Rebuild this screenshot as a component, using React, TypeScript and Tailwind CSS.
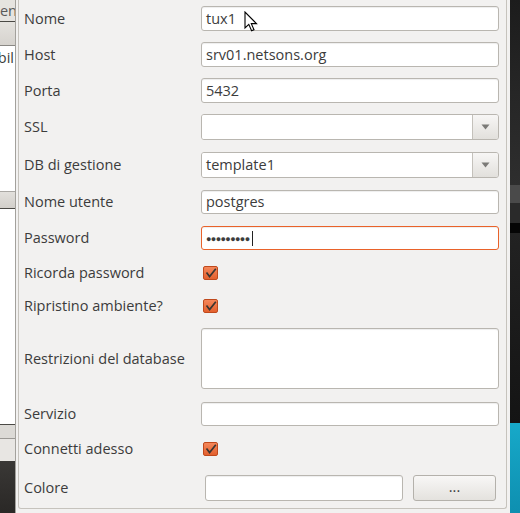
import React from "react";

const txt = "text-[14.5px] text-[#3c3c3c] font-['Open_Sans',sans-serif]";

function Field({ w = "w-[298px]", h = "h-[25px]", children, focus = false }: { w?: string; h?: string; children?: React.ReactNode; focus?: boolean }) {
  return (
    <div
      className={`${w} ${h} rounded-[3px] bg-white flex items-center px-[4px] shadow-[inset_0_1px_1px_rgba(0,0,0,0.07)] border ${
        focus ? "border-[#e9622a]" : "border-[#b9b6b0]"
      }`}
    >
      {children}
    </div>
  );
}

function Combo({ value }: { value?: string }) {
  return (
    <div className="w-[298px] h-[26px] rounded-[3px] border border-[#b9b6b0] flex overflow-hidden">
      <div className="flex-1 bg-white flex items-center px-[4px]">{value}</div>
      <div className="w-[26px] border-l border-[#c4c1bb] bg-gradient-to-b from-[#f7f6f5] to-[#e2e0dc] flex items-center justify-center">
        <svg width="9" height="6" viewBox="0 0 9 6">
          <path d="M0.5 0.5 L8.5 0.5 L4.5 5.5 Z" fill="#7b7a77" />
        </svg>
      </div>
    </div>
  );
}

function Check() {
  return (
    <div className="ml-[2px] w-[15px] h-[14px] rounded-[2px] border border-[#c0491c] bg-gradient-to-b from-[#f5875a] to-[#e3602d] flex items-center justify-center">
      <svg width="12" height="11" viewBox="0 0 12 11">
        <path d="M1.5 4.5 L4.6 8.6 L10.8 0.8" fill="none" stroke="#3b3632" strokeWidth="1.7" strokeLinejoin="miter" />
      </svg>
    </div>
  );
}

function Row({ label, h, mt, children }: { label: string; h: string; mt: string; children: React.ReactNode }) {
  return (
    <div className={`flex items-center ${h} ${mt}`}>
      <div className="w-[177px] shrink-0 whitespace-nowrap">{label}</div>
      {children}
    </div>
  );
}

export default function App() {
  return (
    <div className={`w-[520px] h-[513px] overflow-hidden flex bg-[#151515] ${txt}`}>
      {/* background window strip */}
      <div className="w-[15px] shrink-0 flex flex-col bg-white overflow-hidden">
        <div className="h-[21px] bg-[#e6e4e0] flex items-center justify-end overflow-hidden">
          <span className="whitespace-nowrap text-[#5a5a5a] mr-[-2px]">Gen</span>
        </div>
        <div className="h-[1px] bg-[#4a4945]" />
        <div className="h-[23px] bg-gradient-to-b from-[#e4e2de] to-[#d6d3ce]" />
        <div className="h-[1px] bg-[#8a8884]" />
        <div className="h-[145px] bg-white flex items-start justify-end overflow-hidden pt-[1px]">
          <span className="whitespace-nowrap text-[#3c3c3c] mr-[1px]">Disponibil</span>
        </div>
        <div className="h-[1px] bg-[#aaa8a4]" />
        <div className="h-[16px] bg-gradient-to-b from-[#e2e0dc] to-[#d2cfca]" />
        <div className="h-[1px] bg-[#4a4945]" />
        <div className="h-[215px] bg-white" />
        <div className="h-[1px] bg-[#4a4945]" />
        <div className="h-[13px] bg-[#dcdad6]" />
        <div className="h-[1px] bg-[#9a9894]" />
        <div className="h-[22px] bg-[#e8e6e3]" />
        <div className="flex-1 bg-gradient-to-b from-[#3a3836] to-[#2a2826]" />
      </div>

      {/* dialog window */}
      <div className="w-[495px] shrink-0 border-l border-[#a3a19c] bg-[#f2f1f0] pl-[2px] pr-[3px] pb-[4px] flex flex-col relative">
        <div className="flex-1 border-x border-b border-[#c6c3bd] rounded-b-[3px] pl-[5px] pr-[7px] flex flex-col">
          <Row label="Nome" h="h-[25px]" mt="mt-[6px]">
            <Field>tux1</Field>
          </Row>
          <Row label="Host" h="h-[25px]" mt="mt-[11px]">
            <Field>srv01.netsons.org</Field>
          </Row>
          <Row label="Porta" h="h-[25px]" mt="mt-[11px]">
            <Field>5432</Field>
          </Row>
          <Row label="SSL" h="h-[26px]" mt="mt-[11px]">
            <Combo />
          </Row>
          <Row label="DB di gestione" h="h-[26px]" mt="mt-[12px]">
            <Combo value="template1" />
          </Row>
          <Row label="Nome utente" h="h-[24px]" mt="mt-[12px]">
            <Field h="h-[24px]">postgres</Field>
          </Row>
          <Row label="Password" h="h-[24px]" mt="mt-[12px]">
            <Field h="h-[24px]" focus>
              <span className="text-[9px] tracking-[-0.6px] leading-none">●●●●●●●●●</span>
              <span className="ml-[2px] w-[1px] h-[15px] bg-[#222]" />
            </Field>
          </Row>
          <Row label="Ricorda password" h="h-[20px]" mt="mt-[13px]">
            <Check />
          </Row>
          <Row label="Ripristino ambiente?" h="h-[20px]" mt="mt-[13px]">
            <Check />
          </Row>
          <Row label="Restrizioni del database" h="h-[61px]" mt="mt-[12px]">
            <Field h="h-[61px]" />
          </Row>
          <Row label="Servizio" h="h-[24px]" mt="mt-[13px]">
            <Field h="h-[24px]" />
          </Row>
          <Row label="Connetti adesso" h="h-[20px]" mt="mt-[13px]">
            <Check />
          </Row>
          <div className="flex items-center h-[26px] mt-[16px]">
            <div className="w-[181px] shrink-0">Colore</div>
            <Field w="w-[198px]" h="h-[26px]" />
            <div className="ml-[10px] w-[83px] h-[26px] rounded-[3px] border border-[#b4b1ab] bg-gradient-to-b from-[#f8f7f6] to-[#e4e2de] flex items-center justify-center pb-[2px]">
              ...
            </div>
          </div>
        </div>

        {/* mouse pointer */}
        <svg className="absolute left-[228px] top-[11px]" width="14" height="22" viewBox="0 0 14 22">
          <path d="M1 1 L1 17 L4.8 13.4 L7.6 19.8 L10 18.8 L7.3 12.6 L12.5 12.6 Z" fill="white" stroke="black" strokeWidth="1.1" strokeLinejoin="miter" />
        </svg>
      </div>

      {/* desktop strip */}
      <div className="w-[10px] shrink-0 flex flex-col">
        <div className="h-[185px] bg-gradient-to-b from-[#1c1c1c] via-[#262626] to-[#2e2e2e]" />
        <div className="h-[18px] bg-[#4a4a4a]" />
        <div className="h-[20px] bg-[#2a2a2a]" />
        <div className="h-[10px] bg-[#050505]" />
        <div className="h-[190px] bg-gradient-to-b from-[#222] to-[#141414]" />
        <div className="flex-1 bg-gradient-to-b from-[#17a9c9] to-[#0e8fb0]" />
      </div>
    </div>
  );
}
